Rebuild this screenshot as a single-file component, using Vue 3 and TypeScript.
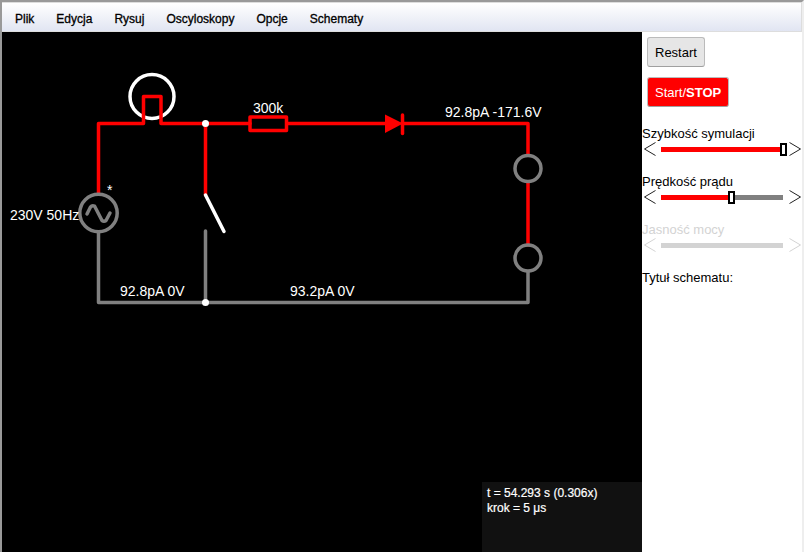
<script setup lang="ts">
import { computed, ref } from 'vue'

interface Wire {
  d: string
  live: boolean
}

interface Label {
  x: number
  y: number
  text: string
}

interface Slider {
  id: string
  label: string
  value: number
  disabled: boolean
}

const menus: string[] = ['Plik', 'Edycja', 'Rysuj', 'Oscyloskopy', 'Opcje', 'Schematy']

const wires: Wire[] = [
  { d: 'M96.5 200V270.5H526V240', live: false },
  { d: 'M203.5 199V270.5', live: false },
  { d: 'M96.5 162V91.5H141.5V64.5H159V91.5H248', live: true },
  { d: 'M203.5 91.5V163', live: true },
  { d: 'M285 91.5H383', live: true },
  { d: 'M400 91.5H526V123', live: true },
  { d: 'M526 150V213', live: true },
]

const labels: Label[] = [
  { x: 8, y: 188, text: '230V 50Hz' },
  { x: 105, y: 163, text: '*' },
  { x: 251, y: 81, text: '300k' },
  { x: 443, y: 85, text: '92.8pA -171.6V' },
  { x: 118, y: 264, text: '92.8pA 0V' },
  { x: 288, y: 264, text: '93.2pA 0V' },
]

const sliders = ref<Slider[]>([
  { id: 'speed', label: 'Szybkość symulacji', value: 100, disabled: false },
  { id: 'current', label: 'Prędkość prądu', value: 57, disabled: false },
  { id: 'power', label: 'Jasność mocy', value: 50, disabled: true },
])

const running = ref(false)
const buttonClass = computed(() => ({ stopped: !running.value }))

function step(slider: Slider, delta: number) {
  slider.value = Math.min(100, Math.max(0, slider.value + delta))
}
</script>

<template>
  <div class="app">
    <nav class="menubar">
      <button v-for="menu in menus" :key="menu" type="button">{{ menu }}</button>
    </nav>
    <div class="workspace">
      <main class="stage">
        <svg class="circuit" width="640" height="520" viewBox="0 0 640 520">
          <circle class="line white" cx="150" cy="64.5" r="22" />
          <path
            v-for="wire in wires"
            :key="wire.d"
            class="line"
            :class="wire.live ? 'live' : 'idle'"
            :d="wire.d"
          />
          <circle class="line idle" cx="96.5" cy="181" r="18.7" />
          <path class="line idle" d="M85 182L88.5 175Q90 173 92.5 174L100 188.5Q102 190 104 188.5L108 181" />
          <rect class="line live" x="248" y="85" width="36.5" height="13.5" />
          <path class="fill-live" d="M383 82.5L401 91.5L383 101Z" />
          <path class="line live" d="M400.5 83V101.5" />
          <path class="line white" d="M203.5 163L222 199.5" />
          <circle class="line idle" cx="526" cy="136.5" r="13" />
          <circle class="line idle" cx="526" cy="226" r="13" />
          <circle class="node" cx="203.5" cy="91.5" r="3.5" />
          <circle class="node" cx="203.5" cy="270.5" r="3.5" />
          <text v-for="item in labels" :key="item.x" :x="item.x" :y="item.y">{{ item.text }}</text>
        </svg>
        <div class="status">
          <div>t = 54.293 s (0.306x)</div>
          <div>krok = 5 μs</div>
        </div>
      </main>
      <aside class="controls">
        <button class="action" type="button">Restart</button>
        <button class="action" :class="buttonClass" type="button" @click="running = !running">
          Start/<strong>STOP</strong>
        </button>
        <div class="sliders">
          <div v-for="slider in sliders" :key="slider.id" class="slider" :class="{ off: slider.disabled }">
            <label :for="slider.id">{{ slider.label }}</label>
            <div class="row">
              <button type="button" aria-label="−" :disabled="slider.disabled" @click="step(slider, -1)">
                <svg width="12" height="14" viewBox="0 0 12 14"><path d="M11.5 0.5L0.5 7L11.5 13.5" /></svg>
              </button>
              <input
                :id="slider.id"
                v-model.number="slider.value"
                type="range"
                min="0"
                max="100"
                :disabled="slider.disabled"
                :style="{ '--level': slider.value + '%' }"
              />
              <button type="button" aria-label="+" :disabled="slider.disabled" @click="step(slider, 1)">
                <svg width="12" height="14" viewBox="0 0 12 14"><path d="M0.5 0.5L11.5 7L0.5 13.5" /></svg>
              </button>
            </div>
          </div>
        </div>
        <p class="title">Tytuł schematu:</p>
      </aside>
    </div>
  </div>
</template>

<style>
body {
  margin: 0;
}
</style>

<style scoped>
.app {
  box-sizing: border-box;
  min-height: 100vh;
  display: flex;
  flex-direction: column;
  border-top: 2px solid #999;
  border-left: 2px solid #999;
  border-right: 2px solid #eee;
  background: #fff;
  color: #000;
  font: 13px/16px "Liberation Sans", Arial, sans-serif;
}

button {
  font: inherit;
  color: inherit;
}

.menubar {
  box-sizing: border-box;
  height: 30px;
  display: flex;
  align-items: center;
  gap: 6px;
  padding: 4px 5px 0;
  border: 1px solid #ddd;
  border-left: 0;
  background: linear-gradient(#fff, #e1e5f2);
  font-size: 12px;
}

.menubar button {
  padding: 0 8px;
  border: 0;
  background: none;
  -webkit-text-stroke: 0.3px #000;
}

.workspace {
  flex: 1;
  display: grid;
  grid-template-columns: minmax(0, 1fr) 160px;
}

.stage {
  position: relative;
  background: #000;
  overflow: hidden;
}

.circuit {
  display: block;
}

.line {
  fill: none;
  stroke-width: 3.5;
  stroke-linecap: round;
  stroke-linejoin: round;
}

.live {
  stroke: #f00;
}

.idle {
  stroke: #808080;
}

.white {
  stroke: #fff;
}

.node {
  fill: #fff;
}

.fill-live {
  fill: #f00;
}

.circuit text {
  fill: #fff;
  font-size: 14px;
}

.status {
  position: absolute;
  right: 0;
  bottom: 0;
  box-sizing: border-box;
  width: 160px;
  height: 70px;
  padding: 4px 5px;
  background: #111;
  color: #fff;
  font-size: 12px;
  line-height: 15px;
  -webkit-text-stroke: 0.2px #fff;
}

.controls {
  display: flex;
  flex-direction: column;
  align-items: flex-start;
}

.action {
  height: 30px;
  margin: 5px 5px 0;
  padding: 2px 7px 0;
  border: 1px solid #bbb;
  border-bottom-color: #a0a0a0;
  border-radius: 3px;
  background: #e6e6e6;
}

.action + .action {
  margin-top: 10px;
}

.action.stopped {
  background: #f00;
  color: #fff;
}

.sliders {
  align-self: stretch;
  margin-top: 19px;
}

.slider {
  height: 48px;
  color: #000;
}

.slider label {
  display: block;
}

.row {
  display: flex;
  align-items: center;
  height: 14px;
  padding: 0 1px 0 2px;
}

.row button {
  display: flex;
  padding: 0;
  border: 0;
  background: none;
}

.row path {
  fill: none;
  stroke: #222;
}

.row input {
  --bar: #808080;
  flex: 1;
  min-width: 0;
  height: 14px;
  margin: 0 2px;
  appearance: none;
  background: linear-gradient(to right, #f00 var(--level), var(--bar) var(--level)) 3px center / calc(100% - 7px) 5px no-repeat;
}

.row input::-webkit-slider-thumb {
  appearance: none;
  box-sizing: border-box;
  width: 7px;
  height: 13px;
  border: 2px solid #000;
  background: #fff;
}

.slider.off {
  color: #d3d3d3;
}

.off path {
  stroke: #d3d3d3;
}

.off input {
  background: linear-gradient(#d3d3d3, #d3d3d3) 3px center / calc(100% - 7px) 5px no-repeat;
}

.off input::-webkit-slider-thumb {
  visibility: hidden;
}

.title {
  margin: 0;
}
</style>
